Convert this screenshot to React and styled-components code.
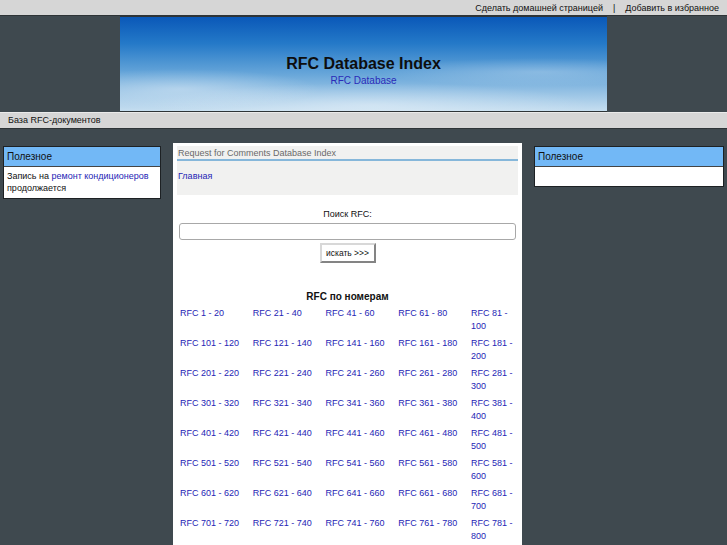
import React from 'react';
import styled, { createGlobalStyle } from 'styled-components';

const GlobalStyle = createGlobalStyle`
    html, body {
        margin: 0;
        padding: 0;
        background: #3f494f;
        font-family: "Liberation Sans", Arial, sans-serif;
        color: #000;
    }
    a {
        color: #2525b5;
        text-decoration: none;
    }
`;

const ranges = Array.from({ length: 40 }, (_, i) => `RFC ${i * 20 + 1} - ${i * 20 + 20}`);

const App = () => {
    const parseRanges = () => {
        return ranges.map(item => {
            return (
                <RangeCell key={item}>
                    <a href="#">{item}</a>
                </RangeCell>
            );
        });
    };

    return (
        <Page>
            <GlobalStyle />
            <TopBar>
                <a href="#">Сделать домашней страницей</a>
                <Separator>|</Separator>
                <a href="#">Добавить в избранное</a>
            </TopBar>
            <Banner>
                <BannerTitle>RFC Database Index</BannerTitle>
                <BannerSub href="#">RFC Database</BannerSub>
            </Banner>
            <NavBar>База RFC-документов</NavBar>
            <Columns>
                <SideBox width={158}>
                    <SideHeading>Полезное</SideHeading>
                    <SideBody>
                        Запись на <a href="#">ремонт кондиционеров</a> продолжается
                    </SideBody>
                </SideBox>
                <Center>
                    <Crumbs>
                        <CrumbTitle>Request for Comments Database Index</CrumbTitle>
                        <CrumbLink href="#">Главная</CrumbLink>
                    </Crumbs>
                    <Search>
                        <SearchLabel>Поиск RFC:</SearchLabel>
                        <SearchInput type="text" />
                        <SearchButton type="button">искать &gt;&gt;&gt;</SearchButton>
                    </Search>
                    <RangesHeading>RFC по номерам</RangesHeading>
                    <RangesGrid>{parseRanges()}</RangesGrid>
                </Center>
                <SideBox width={190}>
                    <SideHeading>Полезное</SideHeading>
                    <SideBody empty />
                </SideBox>
            </Columns>
        </Page>
    );
};

/*
 * Styled Components
 *
 */

const Page = styled.div`
    width: 727px;
    height: 545px;
    overflow: hidden;
`;

const TopBar = styled.div`
    height: 15px;
    background: #d6d6d6;
    border-bottom: 1px solid #2e3437;
    display: flex;
    justify-content: flex-end;
    align-items: center;
    padding-right: 8px;
    font-size: 9px;

    a {
        color: #111;
    }
`;

const Separator = styled.span`
    margin: 0 10px;
    color: #111;
`;

const Banner = styled.div`
    width: 487px;
    height: 96px;
    margin-left: 120px;
    box-sizing: border-box;
    border-top: 1px solid #2e3437;
    border-bottom: 1px solid #2e3437;
    background:
        radial-gradient(ellipse 140px 20px at 60px 72px, rgba(255, 255, 255, 0.35), transparent),
        radial-gradient(ellipse 160px 14px at 420px 55px, rgba(255, 255, 255, 0.25), transparent),
        radial-gradient(ellipse 220px 22px at 250px 88px, rgba(255, 255, 255, 0.35), transparent),
        linear-gradient(to bottom, #0a58b8 0%, #2479c8 28%, #6aa8da 62%, #c6def0 100%);
    display: flex;
    flex-direction: column;
    align-items: center;
    padding-top: 37px;
`;

const BannerTitle = styled.div`
    font-size: 16px;
    font-weight: 700;
    line-height: 19px;
    color: #0d0d0d;
`;

const BannerSub = styled.a`
    font-size: 10px;
    line-height: 13px;
    margin-top: 1px;
    color: #2a2ab8;
`;

const NavBar = styled.div`
    height: 15px;
    background: #d6d6d6;
    border-top: 1px solid #eaeaea;
    border-bottom: 1px solid #2e3437;
    font-size: 9px;
    line-height: 15px;
    padding-left: 8px;
    color: #111;
`;

const Columns = styled.div`
    display: flex;
    align-items: flex-start;
    padding: 14px 3px 0;
    gap: 12px;
`;

const SideBox = styled.div`
    width: ${props => props.width}px;
    box-sizing: border-box;
    margin-top: 3px;
    border: 1px solid #1d2124;
    background: #fff;
`;

const SideHeading = styled.div`
    height: 19px;
    background: #72b8f6;
    border-bottom: 1px solid #444;
    font-size: 10px;
    line-height: 20px;
    padding-left: 3px;
    color: #111;
`;

const SideBody = styled.div`
    height: ${props => (props.empty ? '19px' : 'auto')};
    padding: ${props => (props.empty ? '0' : '3px 3px 4px')};
    font-size: 9px;
    line-height: 12px;
    color: #111;
`;

const Center = styled.div`
    width: 349px;
    height: 420px;
    box-sizing: border-box;
    background: #fff;
    padding: 3px 4px 0;
`;

const Crumbs = styled.div`
    height: 49px;
    background: #f1f1f0;
    display: flex;
    flex-direction: column;
`;

const CrumbTitle = styled.div`
    font-size: 9px;
    line-height: 12px;
    padding-top: 1px;
    color: #6a6a6a;
    padding-left: 1px;
    border-bottom: 2px solid #86b7da;
`;

const CrumbLink = styled.a`
    font-size: 9px;
    line-height: 12px;
    margin-top: 9px;
    padding-left: 1px;
`;

const Search = styled.div`
    display: flex;
    flex-direction: column;
    align-items: center;
    padding: 13px 2px 0;
`;

const SearchLabel = styled.div`
    font-size: 9px;
    line-height: 12px;
    color: #111;
`;

const SearchInput = styled.input`
    width: 100%;
    height: 17px;
    box-sizing: border-box;
    margin-top: 3px;
    border: 1px solid #a8a8a8;
    border-radius: 3px;
    background: #fff;
`;

const SearchButton = styled.button`
    width: 56px;
    height: 20px;
    margin-top: 3px;
    box-sizing: border-box;
    border: 2px outset #d8d8d8;
    background: #fff;
    font-family: "Liberation Sans", Arial, sans-serif;
    font-size: 8.5px;
    color: #111;
    padding: 0;
`;

const RangesHeading = styled.div`
    margin-top: 27px;
    text-align: center;
    font-size: 10px;
    line-height: 13px;
    font-weight: 700;
    color: #111;
`;

const RangesGrid = styled.div`
    display: grid;
    grid-template-columns: repeat(4, 72.75px) 1fr;
    padding: 2px 2px 0 3px;
`;

const RangeCell = styled.div`
    height: 26px;
    padding: 2px 0;
    font-size: 9px;
    line-height: 13px;
`;

export default App;
